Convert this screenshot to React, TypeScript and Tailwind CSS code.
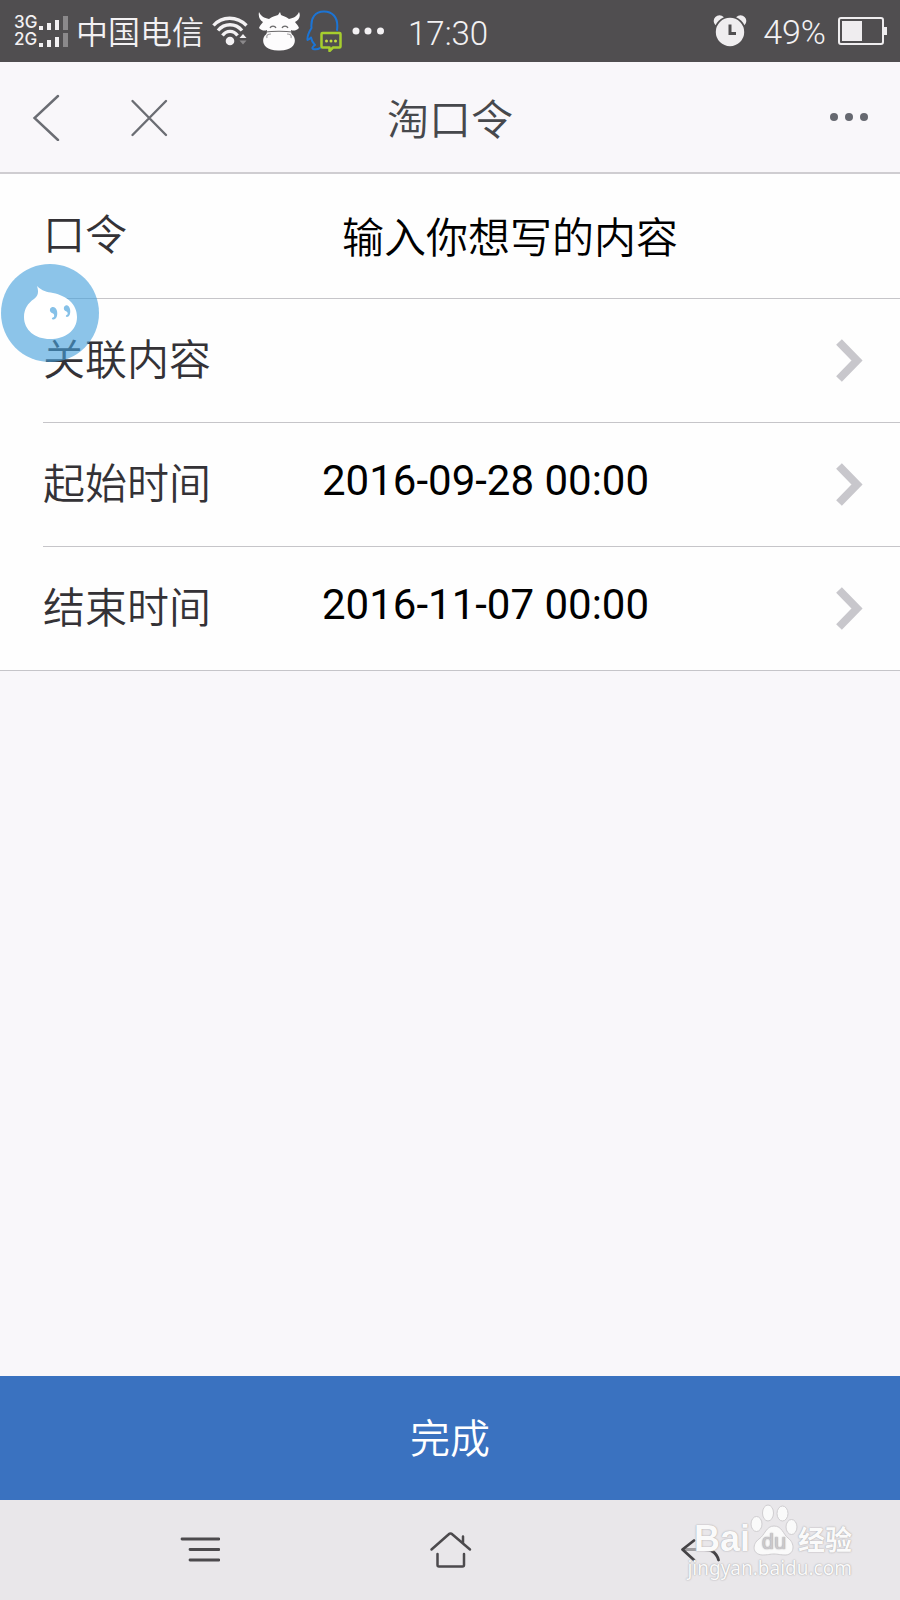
import { useState } from "react";

function SignalBars() {
  return (
    <svg className="h-4 w-8" viewBox="0 0 32 16" fill="#f3f1f3">
      <rect x="0" y="11" width="4" height="4" />
      <rect x="8" y="8" width="4" height="7" />
      <rect x="16" y="5" width="4" height="10" />
      <rect x="24" y="1" width="5" height="14" fill="#8b898b" />
    </svg>
  );
}

function SignalRow({ name }: { name: string }) {
  return (
    <div className="flex h-[17px] items-center">
      <span className="w-[25px] font-['Inter'] text-[17px] leading-[17px] font-medium">{name}</span>
      <SignalBars />
    </div>
  );
}

function WifiIcon() {
  return (
    <svg className="h-[30px] w-9" viewBox="0 0 36 30" fill="none" stroke="#f3f1f3" strokeWidth="3.300">
      <path d="M1.500 9.500C10-.2 25-.2 34.500 9.500" />
      <path d="M6 14.500C12.500 6.800 23.500 6.800 30 14.500" />
      <path d="M10.500 19.500C14.500 14 21.500 14 25.500 19.500" />
      <circle cx="18" cy="25" r="4.300" fill="#f3f1f3" stroke="none" />
      <path d="M27.500 22L31 18l3.500 4z" fill="#f3f1f3" stroke="none" />
      <path d="M27.500 24.500h7L31 28.500z" fill="#8b898b" stroke="none" />
    </svg>
  );
}

function CowIcon() {
  return (
    <svg className="h-10 w-[42px]" viewBox="0 0 42 40" fill="#fdfcfd">
      <path d="M1 1C0 6 2 9 5 11C4 12.500 2 14 1 17C4 20 7 20 9 19C9 21 9 22 8 23.500C3 27 3 40 21 39.500C39 40 39 27 34 23.500C33 22 33 21 33 19C35 20 38 20 41 17C40 14 38 12.500 37 11C41 9 43 5 41 1C39 5 36 7 31 8C28 5.500 25 5 23 4L22 1L20 4C17 5 14 5.500 11 8C6 7 3 5 1 1Z" />
      <g fill="none" stroke="#6b696b" strokeWidth="1.200">
        <path d="M12 17C13 14.500 17 14.500 18 17M24 17C25 14.500 29 14.500 30 17" />
        <path d="M8 21C14 20 28 20 34 21" />
        <path d="M9 27C8 24 10 23 13 23M33 27C34 24 32 23 29 23" stroke="#a3a1a3" />
      </g>
    </svg>
  );
}

function ChatPenguinIcon() {
  return (
    <svg className="h-[42px] w-9" viewBox="0 0 36 42" fill="none" strokeWidth="2" strokeLinejoin="round" strokeLinecap="round">
      <path
        stroke="#1c74d4"
        d="M31 20C33 6 25 1.500 18 1.500C9 1.500 4.500 8 5.500 18C3 22 1 26 1.500 30C2.500 30 4 28.500 5 27.500C5.500 30.500 7 33 9 35C7 36.500 5.500 38 7 39C9 39.500 12 39.500 14 38"
      />
      <path stroke="#a6ce2e" strokeWidth="2.500" d="M16.500 23h17a1 1 0 0 1 1 1v12.500a1 1 0 0 1-1 1H27L23.500 41V37.500H16.500a1 1 0 0 1-1-1V24a1 1 0 0 1 1-1Z" />
      <g fill="#c5dc40">
        <circle cx="20.500" cy="31" r="1.500" />
        <circle cx="25" cy="31" r="1.500" />
        <circle cx="29.500" cy="31" r="1.500" />
      </g>
    </svg>
  );
}

function AlarmIcon() {
  return (
    <svg className="h-8 w-[34px]" viewBox="0 0 34 32" fill="#efedef">
      <circle cx="6.500" cy="6" r="5.800" />
      <circle cx="27.500" cy="6" r="5.800" />
      <circle cx="17" cy="17" r="16" fill="#504e50" />
      <circle cx="17" cy="17" r="14.200" />
      <path d="M17 9.500V18.500H23" fill="none" stroke="#504e50" strokeWidth="3" />
    </svg>
  );
}

function BatteryIcon() {
  return (
    <svg className="h-7 w-[50px]" viewBox="0 0 50 28">
      <rect x="1" y="1" width="44" height="26" rx="2" fill="none" stroke="#efedef" strokeWidth="2" />
      <rect x="4" y="4" width="20" height="20" fill="#efedef" />
      <rect x="46" y="10" width="3" height="8" fill="#efedef" />
    </svg>
  );
}

function StatusBar() {
  return (
    <div className="flex h-[62px] shrink-0 items-center justify-between bg-[#504e50] pr-3 pl-3.5 text-[#f3f1f3]">
      <div className="flex items-center">
        <div className="w-[62px]">
          <SignalRow name="3G" />
          <SignalRow name="2G" />
        </div>
        <span className="mr-2 pb-0.5 font-['Noto_Sans_CJK_SC',sans-serif] text-[32px] leading-10">中国电信</span>
        <WifiIcon />
        <div className="ml-2.5 flex items-center gap-1.5">
          <CowIcon />
          <ChatPenguinIcon />
        </div>
        <svg className="ml-2.5 h-2 w-8" viewBox="0 0 32 8" fill="#f3f1f3">
          <circle cx="4" cy="4" r="3.500" />
          <circle cx="16" cy="4" r="3.500" />
          <circle cx="28.500" cy="4" r="3.500" />
        </svg>
        <span className="ml-6 pt-1.5 font-['Roboto',sans-serif] text-[33px] leading-10 font-light">17:30</span>
      </div>
      <div className="flex items-center">
        <AlarmIcon />
        <span className="mr-3 ml-4 pt-0.5 font-['Roboto',sans-serif] text-[34px] leading-10 font-light">49%</span>
        <BatteryIcon />
      </div>
    </div>
  );
}

function Header() {
  return (
    <header className="grid h-[112px] shrink-0 grid-cols-[1fr_auto_1fr] items-center border-b-2 border-[#cfcdd1] bg-[#f9f7fa] px-8">
      <div className="flex items-center gap-[70px]">
        <button type="button" aria-label="返回">
          <svg className="h-12 w-7" viewBox="0 0 28 48" fill="none" stroke="#6b6d73" strokeWidth="2.400" strokeLinecap="round">
            <path d="M26 3L2.500 25L26 47" />
          </svg>
        </button>
        <button type="button" aria-label="关闭">
          <svg className="h-10 w-10" viewBox="0 0 40 40" fill="none" stroke="#6b6d73" strokeWidth="2.400" strokeLinecap="round">
            <path d="M2.500 4L36 38M36 4L2.500 38" />
          </svg>
        </button>
      </div>
      <h1 className="text-[42px] leading-[60px] text-[#47484c]">淘口令</h1>
      <button type="button" aria-label="更多" className="justify-self-end">
        <svg className="h-10 w-10" viewBox="0 0 40 40" fill="#666870">
          <circle cx="6" cy="20" r="4" />
          <circle cx="21" cy="20" r="4" />
          <circle cx="36" cy="20" r="4" />
        </svg>
      </button>
    </header>
  );
}

function Chevron() {
  return (
    <svg className="h-11 w-7" viewBox="0 0 28 44" fill="none" stroke="#c8c7cc" strokeWidth="8">
      <path d="M3 3L21 21.500L3 40" />
    </svg>
  );
}

function PickerRow({ label, value }: { label: string; value?: string }) {
  return (
    <button type="button" className="flex h-[124px] w-full items-center border-t border-[#c6c5c9] pr-9 text-left">
      <span className="w-[279px] pb-2 text-[42px] leading-[60px] text-[#343236]">{label}</span>
      <span className="flex-1 pb-2 font-['Roboto',sans-serif] text-[42px] leading-[60px] font-normal text-black">{value}</span>
      <Chevron />
    </button>
  );
}

function AssistantBubble() {
  return (
    <button type="button" aria-label="助手" className="absolute top-[90px] left-px h-[98px] w-[98px]">
      <svg viewBox="0 0 98 98">
        <circle cx="49" cy="49" r="49" fill="#469fdb" fillOpacity="0.620" />
        <path
          fill="#fff"
          d="M36 22C41 27 46 28 52 29C66 32 76 40 76 53C76 67 64 75 49 75C34 75 23 66 23 53C23 45 27 39 33 35C37 32 38 28 36 22Z"
        />
        <g fill="#86c1e8">
          <path d="M49 45C51 41.500 55 43 56 47C57 52 55 56 52 55.500C50 55 51 53.500 53 53C53.500 51 53 50 52 49.500C49.500 49 48.500 47 49 45Z" />
          <path d="M63 43C65 40 68 41 69 45C70 50 68 53 66 53C64 52.500 65 51 66.500 50.500C67 49 66.500 48 65.500 47.500C63 47 62.500 45 63 43Z" />
        </g>
      </svg>
    </button>
  );
}

function TokenForm() {
  const [content, setContent] = useState("输入你想写的内容");
  return (
    <section className="relative border-b border-[#c6c5c9] bg-[#fefefe] pl-[43px]">
      <div className="flex h-[124px] items-center">
        <label htmlFor="token" className="w-[299px] pb-2 text-[42px] leading-[60px] text-[#343236]">
          口令
        </label>
        <input
          id="token"
          type="text"
          value={content}
          onChange={(e) => setContent(e.target.value)}
          className="min-w-0 flex-1 bg-transparent pb-0.5 text-[42px] leading-[60px] text-black outline-none"
        />
      </div>
      <PickerRow label="关联内容" />
      <PickerRow label="起始时间" value="2016-09-28 00:00" />
      <PickerRow label="结束时间" value="2016-11-07 00:00" />
      <AssistantBubble />
    </section>
  );
}

function Watermark() {
  return (
    <div className="pointer-events-none absolute top-1 right-12 text-[#fafafa] [text-shadow:0_0_1px_#a9a7aa,0_0_2px_#b9b7ba]">
      <div className="flex h-[52px] items-end justify-end">
        <span className="font-['Liberation_Sans',sans-serif] text-[36px] leading-[34px] font-bold">Bai</span>
        <span className="relative h-[52px] w-12">
          <svg viewBox="0 0 48 52" fill="#fafafa" stroke="#cfcdd0" strokeWidth="1">
            <ellipse cx="6.500" cy="20" rx="5.500" ry="7.500" />
            <ellipse cx="18" cy="9" rx="5.500" ry="8" />
            <ellipse cx="32.500" cy="9.500" rx="5.500" ry="7.500" />
            <ellipse cx="41.500" cy="23" rx="5.500" ry="7.500" />
            <path d="M24 22C32 22 33 30 38 34C45 39 45 50 36 51C30 51 28 50 24 50C20 50 18 51 12 51C2 50 2 40 9 35C15 31 16 22 24 22Z" />
          </svg>
          <span className="absolute inset-x-0 bottom-0.5 text-center font-['Liberation_Sans',sans-serif] text-[22px] leading-6 text-[#cbc9cc]">
            du
          </span>
        </span>
        <span className="text-[27px] leading-[34px] font-bold">经验</span>
      </div>
      <div className="font-['Noto_Sans',sans-serif] text-[19px] leading-6 font-normal">jingyan.baidu.com</div>
    </div>
  );
}

function NavBar() {
  return (
    <nav className="relative flex h-[100px] shrink-0 items-center justify-between bg-[#e9e7ea] px-45">
      <button type="button" aria-label="菜单">
        <svg className="h-10 w-10" viewBox="0 0 40 40" stroke="#4c4a4d" strokeWidth="2.800" strokeLinecap="round">
          <path d="M2 9H39M10 19.500H39M10 30H39" />
        </svg>
      </button>
      <button type="button" aria-label="主页">
        <svg className="h-10 w-10 overflow-visible" viewBox="0 0 40 40" fill="none" stroke="#4c4a4d" strokeWidth="2.500" strokeLinecap="round" strokeLinejoin="round">
          <path d="M1.500 19.500L18.500 4.500Q20.500 2.500 22.500 4.500L40 19.500M33 6.500V13M7.500 24V35Q7.500 36.500 9 36.500H32.500Q34 36.500 34 35V24" />
        </svg>
      </button>
      <button type="button" aria-label="后退">
        <svg className="h-10 w-10" viewBox="0 0 40 40" fill="none" stroke="#454346" strokeWidth="2.800" strokeLinecap="round" strokeLinejoin="round">
          <path d="M3 19.500H24Q30 19.500 33 22" stroke="#a09ea1" />
          <path d="M14 10.500L2.500 19.500L14 30" />
          <path d="M32 21Q37 24 38.500 30" />
        </svg>
      </button>
      <Watermark />
    </nav>
  );
}

export default function App() {
  return (
    <div className="flex min-h-screen flex-col bg-[#f9f7fa] font-['Noto_Sans_CJK_SC',sans-serif] font-[350]">
      <StatusBar />
      <Header />
      <main className="flex flex-1 flex-col justify-between">
        <TokenForm />
        <button type="button" className="h-[124px] w-full bg-[#3a72c0] pb-1 text-[40px] leading-[60px] text-white">
          完成
        </button>
      </main>
      <NavBar />
    </div>
  );
}
